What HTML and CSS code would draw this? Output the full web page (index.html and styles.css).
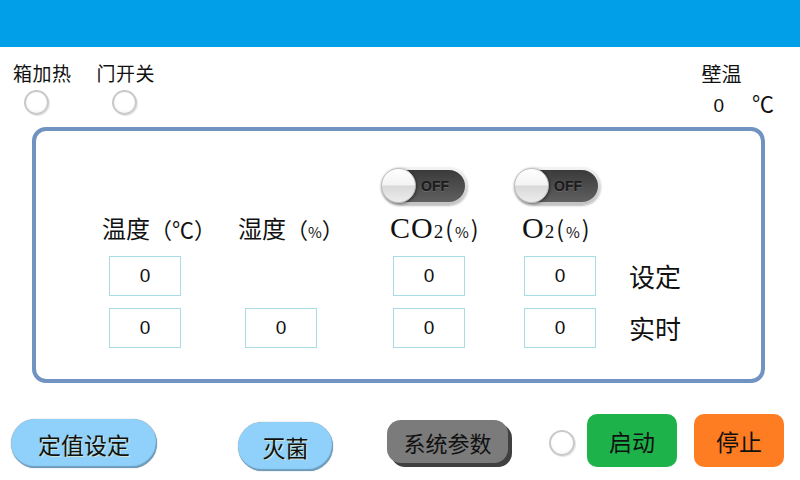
FILE: index.html
```html
<!DOCTYPE html>
<html lang="zh-CN">
<head>
    <meta charset="UTF-8">
    <meta name="viewport" content="width=device-width, initial-scale=1.0">
    <title>培养箱控制</title>
    <link rel="stylesheet" href="styles.css">
</head>
<body>
    <header class="topbar"></header>

    <div class="status-row">
        <div class="indicators">
            <div class="indicator">
                <span class="indicator-label">箱加热</span>
                <span class="lamp"></span>
            </div>
            <div class="indicator">
                <span class="indicator-label">门开关</span>
                <span class="lamp lamp-door"></span>
            </div>
        </div>
        <div class="wall-temp">
            <span class="wall-label">壁温</span>
            <div class="wall-values">
                <span class="wall-value">0</span>
                <span class="wall-unit">℃</span>
            </div>
        </div>
    </div>

    <div class="panel">
        <div class="grid">
            <!-- row 1: switches -->
            <div></div>
            <div></div>
            <div class="toggle"><span class="knob"></span><span class="track">OFF</span></div>
            <div class="toggle"><span class="knob"></span><span class="track">OFF</span></div>
            <div></div>

            <!-- row 2: headers -->
            <div class="head">温度<span class="unit">（℃）</span></div>
            <div class="head">湿度<span class="unit">（<span class="pct">%</span>）</span></div>
            <div class="head head-serif head-co2"><span class="chem">CO</span><span class="sub">2</span><span class="unit unit-half">(<span class="pct">%</span>)</span></div>
            <div class="head head-serif head-o2"><span class="chem">O</span><span class="sub">2</span><span class="unit unit-half">(<span class="pct">%</span>)</span></div>
            <div></div>

            <!-- row 3: set values -->
            <div class="value value-c1">0</div>
            <div></div>
            <div class="value value-c3">0</div>
            <div class="value value-c4">0</div>
            <div class="row-label">设定</div>

            <!-- row 4: actual values -->
            <div class="value value-c1">0</div>
            <div class="value value-c1">0</div>
            <div class="value value-c3">0</div>
            <div class="value value-c4">0</div>
            <div class="row-label">实时</div>
        </div>
    </div>

    <div class="actions">
        <button class="btn-pill btn-setpoint">定值设定</button>
        <button class="btn-pill btn-sterilize">灭菌</button>
        <button class="btn-system">系统参数</button>
        <span class="lamp lamp-run"></span>
        <button class="btn-square btn-start">启动</button>
        <button class="btn-square btn-stop">停止</button>
    </div>
</body>
</html>
```

FILE: styles.css
```css
:root {
    --bar: #019fe8;
    --frame: #7093c2;
    --box: #a9dbe7;
    --sky: #8fd1fb;
    --green: #1eb24b;
    --orange: #fe7c22;
}

* {
    margin: 0;
    padding: 0;
    box-sizing: border-box;
}

body {
    width: 800px;
    height: 480px;
    overflow: hidden;
    background-color: white;
    color: #111;
    font-family: "Noto Sans CJK SC", "Liberation Sans", sans-serif;
}

.topbar {
    height: 47px;
    background-color: var(--bar);
}

/* status row */
.status-row {
    height: 80px;
    display: flex;
    justify-content: space-between;
    padding: 16px 26px 0 13px;
}

.indicators {
    display: flex;
    gap: 25px;
}

.indicator {
    display: flex;
    flex-direction: column;
    align-items: flex-start;
}

.indicator-label {
    font-size: 19px;
    line-height: 20px;
    height: 22px;
    letter-spacing: 0.5px;
}

.lamp {
    display: block;
    width: 25px;
    height: 25px;
    margin-left: 11px;
    margin-top: 5px;
    border-radius: 50%;
    border: 2px solid #c9c9c9;
    background: radial-gradient(circle at 50% 40%, #fff 55%, #ececec 100%);
    box-shadow: 1px 1px 0 #e6e6e6;
}

.lamp-door {
    margin-left: 15px;
}

.wall-temp {
    display: flex;
    flex-direction: column;
    align-items: flex-start;
}

.wall-label {
    font-size: 20px;
    line-height: 24px;
    margin-top: -1px;
    margin-left: 3px;
}

.wall-values {
    display: flex;
    align-items: baseline;
    gap: 28px;
    padding-left: 15px;
    font-family: "Liberation Sans", sans-serif;
}

.wall-value {
    font-size: 19px;
}

.wall-unit {
    font-size: 22px;
}

/* main panel */
.panel {
    width: 733px;
    height: 256px;
    margin-left: 32px;
    border: 4px solid var(--frame);
    border-radius: 14px;
    padding: 36px 0 0 66px;
}

.grid {
    display: grid;
    grid-template-columns: 136px 143px 133px 115px auto;
    grid-template-rows: 44px 45px 52px 40px;
    align-items: start;
}

.toggle {
    position: relative;
    width: 87px;
    height: 38px;
    border-radius: 19px;
    padding: 3px;
    background: linear-gradient(#f4f4f4, #c2c2c2);
    box-shadow: 0 1px 2px rgba(0, 0, 0, 0.25);
}

.track {
    display: flex;
    align-items: center;
    justify-content: flex-end;
    height: 100%;
    padding-right: 16px;
    border-radius: 16px;
    background: linear-gradient(#3a3a3a, #606060);
    font-family: "Liberation Sans", sans-serif;
    font-weight: bold;
    font-size: 14px;
    color: #1b1b1b;
    text-shadow: 0 1px 0 rgba(255, 255, 255, 0.15);
}

.knob {
    position: absolute;
    left: 0;
    top: 1px;
    width: 35px;
    height: 35px;
    border-radius: 50%;
    border: 1px solid #bdbdbd;
    background: linear-gradient(#ffffff 0%, #f3f3f3 48%, #d9d9d9 52%, #ececec 100%);
    box-shadow: 1px 1px 3px rgba(0, 0, 0, 0.45);
}

.head {
    font-size: 24px;
    line-height: 34px;
    white-space: nowrap;
}

.unit {
    font-size: 22px;
    font-family: "Noto Sans CJK SC", sans-serif;
}

.pct {
    font-size: 15px;
}

.unit-half {
    font-size: 23px;
    letter-spacing: 2px;
}

.head-serif {
    font-family: "Liberation Serif", "Noto Sans CJK SC", serif;
    font-size: 30px;
}

.chem {
    letter-spacing: 1px;
}

.head-co2 {
    margin-left: 9px;
}

.head-o2 {
    margin-left: 8px;
}

.sub {
    font-size: 19px;
    margin-right: 2px;
}

.value {
    width: 72px;
    height: 40px;
    border: 1px solid var(--box);
    display: flex;
    align-items: center;
    justify-content: center;
    font-family: "Liberation Sans", sans-serif;
    font-size: 19px;
}

.value-c1 {
    margin-left: 7px;
}

.value-c3 {
    margin-left: 12px;
}

.value-c4 {
    margin-left: 10px;
}

.row-label {
    font-size: 26px;
    line-height: 40px;
}

/* bottom buttons */
.actions {
    display: flex;
    align-items: flex-start;
    padding-left: 11px;
    margin-top: 31px;
}

button {
    font-family: "Noto Sans CJK SC", sans-serif;
    font-size: 22px;
    color: #111;
    border: none;
    cursor: pointer;
}

.btn-pill {
    height: 49px;
    border-radius: 25px;
    background-color: var(--sky);
    box-shadow: inset -1px -2px 1px rgba(0, 0, 0, 0.25), 0 0 1px rgba(0, 0, 0, 0.5);
    text-shadow: 1px 1px 0 rgba(255, 240, 180, 0.6);
    font-size: 23px;
}

.btn-setpoint {
    width: 146px;
    margin-top: 5px;
}

.btn-sterilize {
    width: 95px;
    margin-top: 8px;
    margin-left: 81px;
}

.btn-system {
    width: 121px;
    height: 43px;
    margin-top: 6px;
    margin-left: 54px;
    border-radius: 14px;
    background-color: #7b7b7b;
    box-shadow: 4px 4px 0 #404040;
}

.lamp-run {
    width: 26px;
    height: 26px;
    margin-top: 16px;
    margin-left: 41px;
}

.btn-square {
    width: 90px;
    height: 53px;
    border-radius: 10px;
    font-size: 23px;
}

.btn-start {
    margin-left: 12px;
    background-color: var(--green);
}

.btn-stop {
    margin-left: 17px;
    background-color: var(--orange);
}
```
